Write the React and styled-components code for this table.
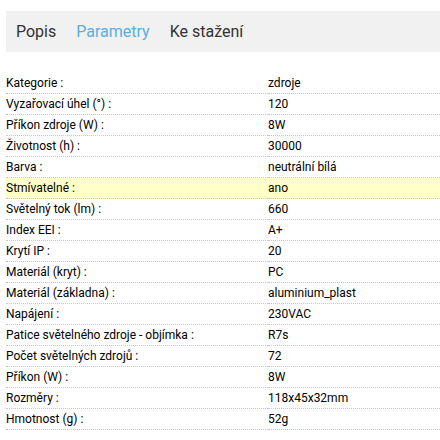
import React from "react";
import styled, {createGlobalStyle} from "styled-components";

const GlobalStyle = createGlobalStyle`
    body {
        margin: 0;
        background: #fff;
        font-family: Roboto, "Liberation Sans", Arial, sans-serif;
    }
`;

const StyledPage = styled.div`
    padding: 11px 0 0 6px;
`;
const StyledTabs = styled.div`
    display: flex;
    align-items: center;
    height: 41px;
    padding-left: 10px;
    gap: 20px;
    background: #f1f1f1;
`;
const StyledTab = styled.div`
    font-size: 16px;
    color: ${(props) => props.active ? "#5cade0" : "#333"};
`;
const StyledTable = styled.div`
    margin-top: 21px;
    display: grid;
    grid-template-columns: 262px 1fr;
`;
const StyledCell = styled.div`
    height: 20px;
    line-height: 20px;
    font-size: 12px;
    color: #000;
    border-bottom: 1px dotted #c8c8c8;
    background: ${(props) => props.highlight ? "#ffffc8" : "transparent"};
    white-space: nowrap;
`;

const tabs = ["Popis", "Parametry", "Ke stažení"];

const params = [
    ["Kategorie", "zdroje"],
    ["Vyzařovací úhel (°)", "120"],
    ["Příkon zdroje (W)", "8W"],
    ["Životnost (h)", "30000"],
    ["Barva", "neutrální bílá"],
    ["Stmívatelné", "ano", true],
    ["Světelný tok (lm)", "660"],
    ["Index EEI", "A+"],
    ["Krytí IP", "20"],
    ["Materiál (kryt)", "PC"],
    ["Materiál (základna)", "aluminium_plast"],
    ["Napájení", "230VAC"],
    ["Patice světelného zdroje - objímka", "R7s"],
    ["Počet světelných zdrojů", "72"],
    ["Příkon (W)", "8W"],
    ["Rozměry", "118x45x32mm"],
    ["Hmotnost (g)", "52g"]
];

export default function App() {
    return (
        <StyledPage>
            <GlobalStyle/>
            <StyledTabs>
                {tabs.map((tab) => (
                    <StyledTab key={tab} active={tab === "Parametry"}>{tab}</StyledTab>
                ))}
            </StyledTabs>
            <StyledTable>
                {params.map(([label, value, highlight]) => (
                    <React.Fragment key={label}>
                        <StyledCell highlight={highlight}>{label} :</StyledCell>
                        <StyledCell highlight={highlight}>{value}</StyledCell>
                    </React.Fragment>
                ))}
            </StyledTable>
        </StyledPage>
    );
}
